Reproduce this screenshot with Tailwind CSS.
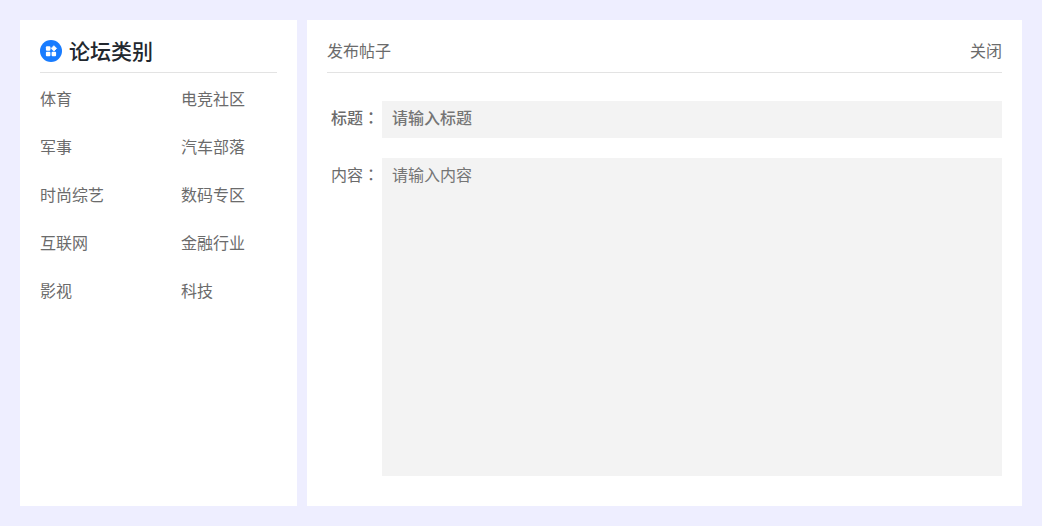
<!DOCTYPE html>
<html lang="zh-CN">
<head>
  <meta charset="UTF-8" />
  <meta name="viewport" content="width=device-width, initial-scale=1.0"/>
  <title>发布帖子</title>
  <script src="https://cdn.jsdelivr.net/npm/@tailwindcss/browser@4"></script>
</head>
<body class="bg-[#eeeeff] font-['Noto_Sans_CJK_SC',sans-serif] text-base text-[#6b6b6b]">
  <div class="flex min-h-screen gap-[10px] p-5">

    <!-- Categories -->
    <aside class="w-[277px] shrink-0 bg-white p-5">
      <div class="flex h-[33px] items-start gap-[7px] border-b border-[#e3e3e3]">
        <svg class="size-[22px]" viewBox="0 0 22 22" fill="none" aria-hidden="true">
          <circle cx="11" cy="11" r="11" fill="#187cff"/>
          <rect x="5.9" y="6.2" width="4.5" height="4.5" rx="1" fill="#fff"/>
          <rect x="5.9" y="11.8" width="4.5" height="4.5" rx="1" fill="#fff"/>
          <rect x="11.6" y="11.8" width="4.5" height="4.5" rx="1" fill="#fff"/>
          <path d="M13.9 5.7 16.6 8.4 13.9 11.1 11.2 8.4Z" fill="#fff" stroke="#fff" stroke-width=".8" stroke-linejoin="round"/>
        </svg>
        <h2 class="text-[21px] leading-5 font-medium text-[#22272e]">论坛类别</h2>
      </div>
      <nav class="mt-[13px] grid grid-cols-[141px_1fr] gap-y-6 leading-6">
        <a href="#">体育</a>
        <a href="#">电竞社区</a>
        <a href="#">军事</a>
        <a href="#">汽车部落</a>
        <a href="#">时尚综艺</a>
        <a href="#">数码专区</a>
        <a href="#">互联网</a>
        <a href="#">金融行业</a>
        <a href="#">影视</a>
        <a href="#">科技</a>
      </nav>
    </aside>

    <!-- New post -->
    <main class="flex min-w-0 flex-1 flex-col bg-white px-5 pt-5 pb-[30px]">
      <div class="flex h-[33px] items-start justify-between border-b border-[#e3e3e3] leading-5">
        <h1>发布帖子</h1>
        <button type="button">关闭</button>
      </div>
      <form class="mt-7 flex flex-1 flex-col gap-5 leading-6">
        <div class="flex">
          <label for="title" class="w-[55px] shrink-0 pt-1 pl-1 font-medium">标题<span class="font-['Noto_Sans_CJK_TC',sans-serif]" lang="zh-TW">：</span></label>
          <input id="title" type="text" placeholder="请输入标题" class="h-[37px] min-w-0 flex-1 bg-[#f3f3f3] px-[10px] pb-[5px] font-medium outline-none placeholder:text-[#757575]">
        </div>
        <div class="flex flex-1">
          <label for="content" class="w-[55px] shrink-0 pt-1 pl-1">内容<span class="font-['Noto_Sans_CJK_TC',sans-serif]" lang="zh-TW">：</span></label>
          <textarea id="content" placeholder="请输入内容" class="min-h-[300px] min-w-0 flex-1 resize-none bg-[#f3f3f3] px-[10px] py-1 outline-none placeholder:text-[#757575]"></textarea>
        </div>
      </form>
    </main>

  </div>
</body>
</html>
